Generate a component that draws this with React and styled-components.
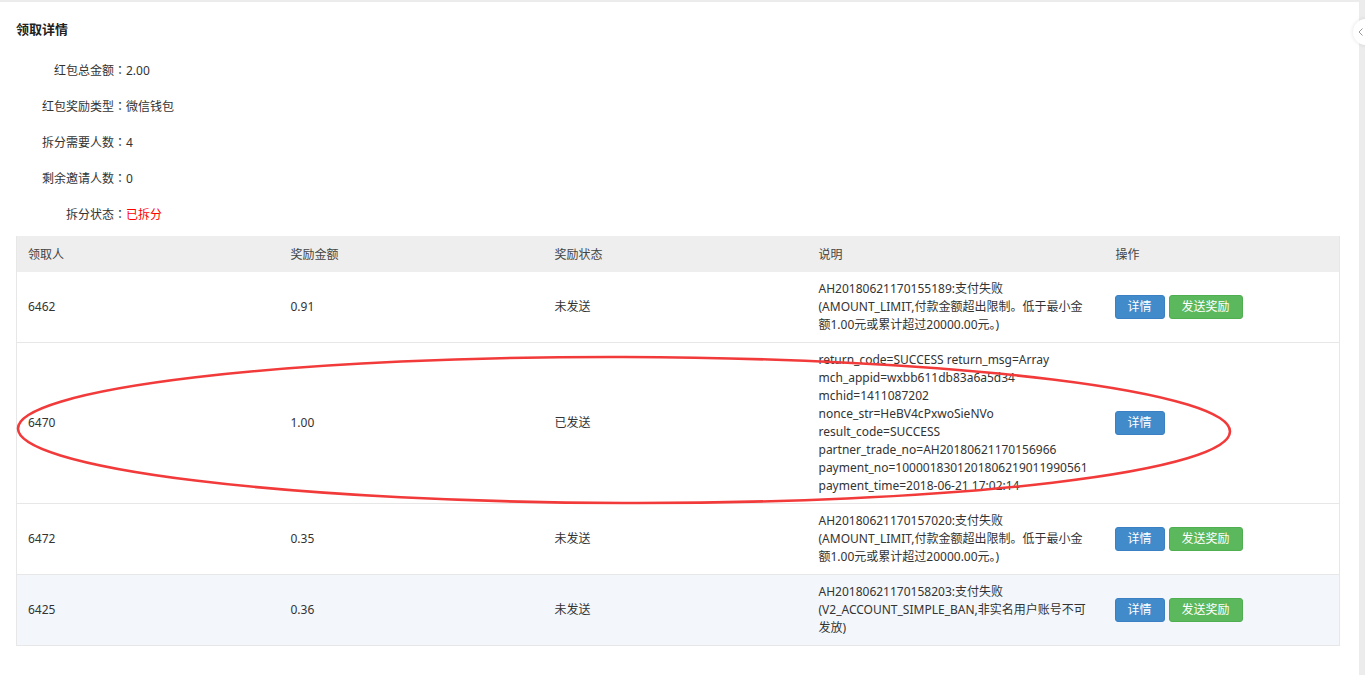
import styled, { createGlobalStyle } from 'styled-components';

const GlobalStyle = createGlobalStyle`
  html, body {
    margin: 0;
    padding: 0;
    background: #ececec;
  }
  body {
    font-family: "Noto Sans", "Noto Sans CJK SC", sans-serif;
    font-size: 12px;
    color: #333;
  }
`;

const info = [
  { label: '红包总金额', value: '2.00' },
  { label: '红包奖励类型', value: '微信钱包' },
  { label: '拆分需要人数', value: '4' },
  { label: '剩余邀请人数', value: '0' },
  { label: '拆分状态', value: '已拆分', red: true },
];

const rows = [
  {
    id: '6462',
    amount: '0.91',
    status: '未发送',
    lines: [
      'AH20180621170155189:支付失败',
      '(AMOUNT_LIMIT,付款金额超出限制。低于最小金',
      '额1.00元或累计超过20000.00元。)',
    ],
    send: true,
  },
  {
    id: '6470',
    amount: '1.00',
    status: '已发送',
    lines: [
      'return_code=SUCCESS return_msg=Array',
      'mch_appid=wxbb611db83a6a5d34',
      'mchid=1411087202',
      'nonce_str=HeBV4cPxwoSieNVo',
      'result_code=SUCCESS',
      'partner_trade_no=AH20180621170156966',
      'payment_no=1000018301201806219011990561',
      'payment_time=2018-06-21 17:02:14',
    ],
    send: false,
  },
  {
    id: '6472',
    amount: '0.35',
    status: '未发送',
    lines: [
      'AH20180621170157020:支付失败',
      '(AMOUNT_LIMIT,付款金额超出限制。低于最小金',
      '额1.00元或累计超过20000.00元。)',
    ],
    send: true,
  },
  {
    id: '6425',
    amount: '0.36',
    status: '未发送',
    lines: [
      'AH20180621170158203:支付失败',
      '(V2_ACCOUNT_SIMPLE_BAN,非实名用户账号不可',
      '发放)',
    ],
    send: true,
    hover: true,
  },
];

export default function App() {
  return (
    <Page>
      <GlobalStyle />
      <Panel>
        <Title>领取详情</Title>
        <InfoList>
          {info.map((item) => (
            <InfoRow key={item.label}>
              <InfoLabel>
                {item.label}
                <Colon>：</Colon>
              </InfoLabel>
              <InfoValue $red={item.red}>{item.value}</InfoValue>
            </InfoRow>
          ))}
        </InfoList>
        <Table>
          <colgroup>
            <col style={{ width: 263 }} />
            <col style={{ width: 264 }} />
            <col style={{ width: 264 }} />
            <col style={{ width: 297 }} />
            <col style={{ width: 235 }} />
          </colgroup>
          <thead>
            <tr>
              <Th>领取人</Th>
              <Th>奖励金额</Th>
              <Th>奖励状态</Th>
              <Th>说明</Th>
              <Th>操作</Th>
            </tr>
          </thead>
          <tbody>
            {rows.map((row) => (
              <Tr key={row.id} $hover={row.hover}>
                <Td>{row.id}</Td>
                <Td>{row.amount}</Td>
                <Td>{row.status}</Td>
                <Td>
                  {row.lines.map((line) => (
                    <Line key={line}>{line}</Line>
                  ))}
                </Td>
                <Td>
                  <Actions>
                    <Button $kind="info">详情</Button>
                    {row.send && <Button $kind="success">发送奖励</Button>}
                  </Actions>
                </Td>
              </Tr>
            ))}
          </tbody>
        </Table>
        <Circle width="1365" height="675" viewBox="0 0 1365 675">
          <ellipse
            cx="624"
            cy="430"
            rx="606"
            ry="73"
            fill="none"
            stroke="#f23a3a"
            strokeWidth="2.6"
            transform="rotate(0.15 624 430)"
          />
        </Circle>
      </Panel>
      <Toggle>
        <svg width="10" height="10" viewBox="0 0 10 10">
          <path d="M6.5 1.5 L3 5 L6.5 8.5" fill="none" stroke="#999" strokeWidth="1" />
        </svg>
      </Toggle>
    </Page>
  );
}

const Page = styled.div`
  position: relative;
  min-height: 675px;
  padding-top: 2px;
  padding-right: 6px;
  box-sizing: border-box;
`;

const Panel = styled.div`
  background: #fff;
  min-height: 673px;
  padding: 18px 19px 0 16px;
  box-sizing: border-box;
`;

const Title = styled.h2`
  margin: 0;
  font-size: 13px;
  font-weight: bold;
  line-height: 18px;
  color: #222;
`;

const InfoList = styled.div`
  display: flex;
  flex-direction: column;
  margin-top: 14px;
  margin-bottom: 4px;
`;

const InfoRow = styled.div`
  display: flex;
  height: 36px;
  align-items: center;
`;

const InfoLabel = styled.span`
  width: 110px;
  text-align: right;
  white-space: nowrap;
`;

const Colon = styled.span`
  font-family: "Noto Sans CJK TC", "Noto Sans CJK SC", sans-serif;
`;

const InfoValue = styled.span`
  color: ${(p) => (p.$red ? '#f00' : '#333')};
`;

const Table = styled.table`
  width: 1323px;
  table-layout: fixed;
  border-collapse: collapse;
  border-left: 1px solid #e7e7e7;
  border-right: 1px solid #e7e7e7;
`;

const Th = styled.th`
  background: #eeeeee;
  height: 36px;
  padding: 0 11px;
  text-align: left;
  font-weight: normal;
  color: #444;
  box-sizing: border-box;
`;

const Tr = styled.tr`
  background: ${(p) => (p.$hover ? '#f3f7fb' : '#fff')};
  border-bottom: 1px solid #e7e7e7;
`;

const Td = styled.td`
  padding: 8px 11px;
  vertical-align: middle;
  line-height: 18px;
  color: #333;
`;

const Line = styled.div`
  white-space: nowrap;
`;

const Actions = styled.div`
  display: flex;
  gap: 4px;
  margin-left: -1px;
`;

const Button = styled.button`
  height: 24px;
  padding: 0 12px;
  border: 1px solid ${(p) => (p.$kind === 'info' ? '#3a80c2' : '#4fae4f')};
  border-radius: 3px;
  background: ${(p) => (p.$kind === 'info' ? '#428bca' : '#5cb85c')};
  color: #fff;
  font-family: inherit;
  font-size: 12px;
  line-height: 22px;
  cursor: pointer;
`;

const Circle = styled.svg`
  position: absolute;
  left: 0;
  top: 0;
  pointer-events: none;
`;

const Toggle = styled.div`
  position: absolute;
  top: 19px;
  left: 1353px;
  width: 26px;
  height: 26px;
  border-radius: 50%;
  background: #fff;
  box-shadow: 0 0 4px rgba(0, 0, 0, 0.12);
  display: flex;
  align-items: center;
  padding-left: 3px;
  box-sizing: border-box;
`;
